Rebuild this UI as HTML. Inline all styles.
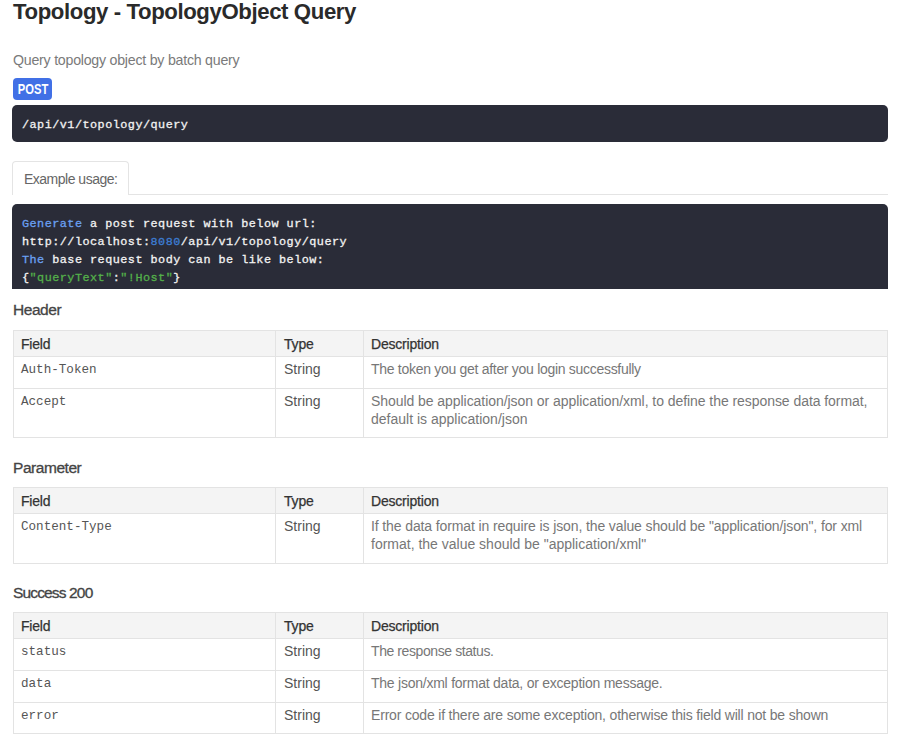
<!DOCTYPE html>
<html><head><meta charset="utf-8">
<style>
*{box-sizing:border-box;margin:0;padding:0}
html,body{width:900px;height:736px;overflow:hidden;background:#fff}
body{position:relative;font-family:"Liberation Sans",sans-serif;color:#333}
.abs{position:absolute;white-space:nowrap}
h1{position:absolute;left:13px;top:0;font-size:22.2px;letter-spacing:-0.4px;font-weight:bold;color:#2a2a2a;line-height:24px;white-space:nowrap}
.sub{left:13px;top:50px;font-size:14.2px;letter-spacing:-0.24px;color:#7a7a7a;line-height:20px}
.badge{left:13px;top:78px;width:39px;height:22px;background:#4170e6;border-radius:4px;color:#fff;font-weight:bold;font-size:14px;line-height:22px;text-align:center}
.badge span{display:inline-block;transform:scaleX(0.8);margin-left:1px}
.code1{left:12px;top:105px;width:876px;height:37px;background:#2a2c38;border-radius:5px}
.mono{font-family:"Liberation Mono",monospace}
.code1 .t{position:absolute;left:10px;top:11px;font-size:11.8px;letter-spacing:0.48px;line-height:18px;color:#f2f2f2;-webkit-text-stroke:0.3px #f2f2f2}
.tabline{left:12px;top:194px;width:876px;height:1px;background:#e4e4e4}
.tab{left:12px;top:161px;width:117px;height:34px;border:1px solid #e4e4e4;border-bottom:none;border-radius:4px 4px 0 0;background:#fff;font-size:14px;letter-spacing:-0.5px;color:#666;line-height:20px;padding:7px 0 0 11px}
.code2{left:12px;top:204px;width:876px;height:85px;background:#2a2c38;border-radius:5px 5px 0 0;overflow:hidden}
.code2 .t{position:absolute;left:10px;top:11px;font-size:11.8px;letter-spacing:0.48px;line-height:18px;color:#f2f2f2;-webkit-text-stroke:0.3px currentColor;white-space:pre}
.kw{color:#6aa0f2}
.num{color:#3d7dd2}
.str{color:#54b04a}
h2{position:absolute;left:13px;font-size:15.5px;letter-spacing:-0.45px;font-weight:normal;color:#444;line-height:20px;white-space:nowrap;-webkit-text-stroke:0.3px #444}
table{position:absolute;left:13px;width:875px;border-collapse:collapse;table-layout:fixed}
td,th{border:1px solid #e3e3e3;vertical-align:top;text-align:left;padding:0 7px;font-size:14px;line-height:18px}
th{background:#f4f4f4;color:#333;font-weight:normal;height:26px;padding-top:4px;font-size:14px;letter-spacing:-0.2px;-webkit-text-stroke:0.25px #333}
td{color:#555;padding-top:2.5px}
td.f{font-family:"Liberation Mono",monospace;font-size:12.6px;color:#555;padding-top:3.5px}
td.d{color:#777}
col.c1{width:262px}
col.c2{width:88px}
tr td:nth-child(2),tr th:nth-child(2){padding-left:8px}
</style></head><body>
<h1>Topology - TopologyObject Query</h1>
<div class="abs sub">Query topology object by batch query</div>
<div class="abs badge"><span>POST</span></div>
<div class="abs code1"><div class="t mono">/api/v1/topology/query</div></div>
<div class="abs tabline"></div>
<div class="abs tab">Example usage:</div>
<div class="abs code2"><div class="t mono"><span class="kw">Generate</span> a post request with below url:
http://localhost:<span class="num">8080</span>/api/v1/topology/query
<span class="kw">The</span> base request body can be like below:
{<span class="str">"queryText"</span>:<span class="str">"!Host"</span>}</div></div>

<h2 style="top:300px">Header</h2>
<table style="top:330px">
<colgroup><col class="c1"><col class="c2"><col></colgroup>
<tr><th>Field</th><th>Type</th><th>Description</th></tr>
<tr style="height:32px"><td class="f">Auth-Token</td><td>String</td><td class="d"><span style="letter-spacing:-0.293px">The token you get after you login successfully</span></td></tr>
<tr style="height:49px"><td class="f">Accept</td><td>String</td><td class="d"><span style="letter-spacing:-0.058px">Should be application/json or application/xml, to define the response data format,</span><br><span style="letter-spacing:0.002px">default is application/json</span></td></tr>
</table>

<h2 style="top:458px">Parameter</h2>
<table style="top:487px">
<colgroup><col class="c1"><col class="c2"><col></colgroup>
<tr><th>Field</th><th>Type</th><th>Description</th></tr>
<tr style="height:50px"><td class="f">Content-Type</td><td>String</td><td class="d"><span style="letter-spacing:-0.115px">If the data format in require is json, the value should be "application/json", for xml</span><br><span style="letter-spacing:-0.003px">format, the value should be "application/xml"</span></td></tr>
</table>

<h2 style="top:583px;letter-spacing:-0.85px">Success 200</h2>
<table style="top:612px">
<colgroup><col class="c1"><col class="c2"><col></colgroup>
<tr><th>Field</th><th>Type</th><th>Description</th></tr>
<tr style="height:32px"><td class="f">status</td><td>String</td><td class="d"><span style="letter-spacing:-0.413px">The response status.</span></td></tr>
<tr style="height:32px"><td class="f">data</td><td>String</td><td class="d"><span style="letter-spacing:-0.239px">The json/xml format data, or exception message.</span></td></tr>
<tr style="height:31px"><td class="f">error</td><td>String</td><td class="d"><span style="letter-spacing:-0.184px">Error code if there are some exception, otherwise this field will not be shown</span></td></tr>
</table>
</body></html>
